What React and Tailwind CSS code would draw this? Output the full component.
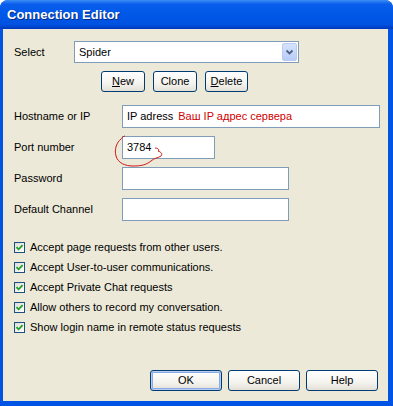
const font = { fontFamily: '"Liberation Sans", Arial, sans-serif' }

function XpButton({ children, className = "", primary = false }) {
    return (
        <button
            className={
                "flex items-center justify-center h-[21px] rounded-[3px] border border-[#003C74] bg-[linear-gradient(180deg,#FFFFFF_0%,#F4F3EE_60%,#E3E0D6_100%)] text-[11px] text-black " +
                (primary ? "shadow-[inset_0_0_0_1px_#B6CCF1,inset_0_0_0_2px_#8AAAE6] " : "") +
                className
            }
        >
            {children}
        </button>
    )
}

function Field({ label, width, children }) {
    return (
        <div className="flex items-center h-[23px]">
            <div className="w-[119px] pl-[11px] text-[11px] text-black">{label}</div>
            <div className={"h-[23px] border border-[#7F9DB9] bg-white flex items-center pl-[4px] text-[11px] text-black " + width}>
                {children}
            </div>
        </div>
    )
}

function Check({ label }) {
    return (
        <div className="flex items-center h-[20px] pl-[11px]">
            <div className="w-[11px] h-[11px] border border-[#1C5180] bg-[linear-gradient(135deg,#DCDCD7_0%,#FFFFFF_100%)] flex items-center justify-center">
                <svg width="9" height="9" viewBox="0 0 9 9">
                    <path d="M1.5 4.2 L3.6 6.3 L7.6 2.2" fill="none" stroke="#21A121" strokeWidth="1.8" />
                </svg>
            </div>
            <span className="ml-[5px] text-[11px] text-black">{label}</span>
        </div>
    )
}

export default function App() {
    return (
        <div style={font} className="relative w-[393px] h-[406px] flex flex-col bg-[#0054E3] rounded-t-[8px] overflow-hidden">
            <div className="h-[29px] shrink-0 flex items-center pl-[7px] bg-[linear-gradient(180deg,#3D8FF5_0%,#0A5EEB_14%,#0058E8_50%,#0051DF_85%,#0038BA_100%)]">
                <span className="text-white font-bold text-[13px] [text-shadow:1px_1px_0_#0A2A80]">Connection Editor</span>
            </div>

            <div className="flex-1 ml-[3px] mr-[5px] mb-[5px] bg-[#ECE9D8] flex flex-col">
                <div className="flex items-center mt-[12px] h-[22px]">
                    <div className="w-[71px] pl-[11px] text-[11px] text-black">Select</div>
                    <div className="w-[225px] h-[22px] border border-[#7F9DB9] bg-white flex items-center justify-between pl-[4px] pr-[1px] text-[11px] text-black">
                        <span>Spider</span>
                        <div className="w-[15px] h-[18px] rounded-[2px] border border-[#B9CBF3] bg-[linear-gradient(180deg,#D7E3FD_0%,#B7CBF7_100%)] flex items-center justify-center">
                            <svg width="9" height="7" viewBox="0 0 9 7">
                                <path d="M1.5 1.5 L4.5 4.5 L7.5 1.5" fill="none" stroke="#4D6185" strokeWidth="1.8" />
                            </svg>
                        </div>
                    </div>
                </div>

                <div className="flex mt-[8px] ml-[98px] gap-[8px]">
                    <XpButton className="w-[44px]"><span><span className="underline">N</span>ew</span></XpButton>
                    <XpButton className="w-[44px]">Clone</XpButton>
                    <XpButton className="w-[43px]"><span><span className="underline">D</span>elete</span></XpButton>
                </div>

                <div className="flex flex-col gap-[8px] mt-[13px]">
                    <Field label="Hostname or IP" width="w-[258px]">
                        <span>IP adress</span>
                        <span className="ml-[5px] text-[#D00000]">Ваш IP адрес сервера</span>
                    </Field>
                    <Field label="Port number" width="w-[93px]">3784</Field>
                    <Field label="Password" width="w-[167px]" />
                    <Field label="Default Channel" width="w-[167px]" />
                </div>

                <div className="flex flex-col mt-[16px]">
                    <Check label="Accept page requests from other users." />
                    <Check label="Accept User-to-user communications." />
                    <Check label="Accept Private Chat requests" />
                    <Check label="Allow others to record my conversation." />
                    <Check label="Show login name in remote status requests" />
                </div>

                <div className="mt-auto mb-[10px] flex justify-end gap-[6px] pr-[10px]">
                    <XpButton primary className="w-[72px]">OK</XpButton>
                    <XpButton className="w-[72px]">Cancel</XpButton>
                    <XpButton className="w-[72px]">Help</XpButton>
                </div>
            </div>

            <svg className="absolute left-0 top-0 pointer-events-none" width="393" height="406">
                <path
                    d="M125 136 C121 137, 122 139, 121 139 C117 142, 114 149, 116 156 C118 163, 125 166, 133 166 C141 166, 146 165, 151 161 C154 158, 158 158, 161 156 C163 154, 161 152, 158 151 C160 150, 158 148, 155 148"
                    fill="none"
                    stroke="#D01818"
                    strokeWidth="1"
                />
            </svg>
        </div>
    )
}
